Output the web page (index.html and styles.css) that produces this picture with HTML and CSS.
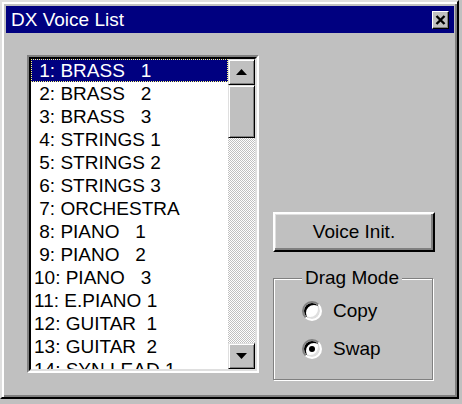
FILE: index.html
```html
<!DOCTYPE html>
<html lang="en">
<head>
    <meta charset="UTF-8">
    <title>DX Voice List</title>
    <link rel="stylesheet" href="styles.css">
</head>
<body>
    <div class="window">
        <div class="titlebar">
            <span class="title">DX Voice List</span>
            <button class="close">
                <svg width="11" height="10" viewBox="0 0 11 10"><path d="M1.5 1 L9.5 9 M9.5 1 L1.5 9" stroke="#000" stroke-width="2.4" fill="none"/></svg>
            </button>
        </div>

        <div class="content">
            <div class="listbox">
                <div class="listbox-inner">
                    <ul class="items">
                        <li class="selected"> 1: BRASS   1</li>
                        <li> 2: BRASS   2</li>
                        <li> 3: BRASS   3</li>
                        <li> 4: STRINGS 1</li>
                        <li> 5: STRINGS 2</li>
                        <li> 6: STRINGS 3</li>
                        <li> 7: ORCHESTRA</li>
                        <li> 8: PIANO   1</li>
                        <li> 9: PIANO   2</li>
                        <li>10: PIANO   3</li>
                        <li>11: E.PIANO 1</li>
                        <li>12: GUITAR  1</li>
                        <li>13: GUITAR  2</li>
                        <li>14: SYN LEAD 1</li>
                    </ul>
                    <div class="scrollbar">
                        <div class="sb-btn">
                            <svg width="11" height="6" viewBox="0 0 11 6"><path d="M5.5 0 L11 6 L0 6 Z" fill="#000"/></svg>
                        </div>
                        <div class="sb-thumb"></div>
                        <div class="sb-track"></div>
                        <div class="sb-btn">
                            <svg width="11" height="6" viewBox="0 0 11 6"><path d="M0 0 L11 0 L5.5 6 Z" fill="#000"/></svg>
                        </div>
                    </div>
                </div>
            </div>

            <div class="side">
                <button class="btn">Voice Init.</button>
                <div class="group">
                    <span class="group-label">Drag Mode</span>
                    <div class="radio"><span class="dot"></span>Copy</div>
                    <div class="radio checked"><span class="dot"></span>Swap</div>
                </div>
            </div>
        </div>
    </div>
</body>
</html>
```

FILE: styles.css
```css
body, html {
    margin: 0;
    padding: 0;
    background-color: #c0c0c0;
    font-family: "Liberation Sans", Arial, sans-serif;
    font-size: 19px;
}
.window {
    width: 459px;
    height: 399px;
    box-sizing: border-box;
    background-color: #c0c0c0;
    border: 2px solid;
    border-color: #dfdfdf #000 #000 #dfdfdf;
    box-shadow: inset 2px 2px 0 #fff, inset -2px -2px 0 #808080;
    padding: 4px 3px 4px 4px;
}
.titlebar {
    height: 27px;
    background-color: #000080;
    color: #fff;
    display: flex;
    align-items: center;
    justify-content: space-between;
    padding: 0 5px 0 5px;
}
.title {
    font-size: 19px;
    line-height: 27px;
}
.close {
    width: 17px;
    height: 18px;
    padding: 0;
    margin: 0;
    background-color: #c0c0c0;
    border: 1px solid;
    border-color: #fff #000 #000 #fff;
    box-shadow: inset -1px -1px 0 #808080;
    display: flex;
    align-items: center;
    justify-content: center;
}
.content {
    display: flex;
    align-items: flex-start;
    padding: 22px 0 0 21px;
}
.listbox {
    width: 232px;
    height: 318px;
    box-sizing: border-box;
    border: 2px solid;
    border-color: #808080 #fff #fff #808080;
}
.listbox-inner {
    height: 100%;
    box-sizing: border-box;
    border: 2px solid;
    border-color: #000 #dfdfdf #dfdfdf #000;
    display: flex;
}
.items {
    flex: 1;
    margin: 0;
    padding: 0;
    list-style: none;
    background-color: #fff;
    overflow: hidden;
}
.items li {
    height: 23px;
    line-height: 23px;
    padding-left: 3px;
    white-space: pre;
    color: #000;
}
.items li.selected {
    background-color: #000080;
    color: #fff;
    border: 1px dotted #ffff80;
    line-height: 21px;
    box-sizing: border-box;
    padding-left: 2px;
}
.scrollbar {
    width: 27px;
    display: flex;
    flex-direction: column;
}
.sb-btn, .sb-thumb {
    box-sizing: border-box;
    background-color: #c0c0c0;
    border: 1px solid;
    border-color: #dfdfdf #000 #000 #dfdfdf;
    box-shadow: inset 1px 1px 0 #fff, inset -1px -1px 0 #808080;
}
.sb-btn {
    height: 26px;
    display: flex;
    align-items: center;
    justify-content: center;
}
.sb-thumb {
    height: 53px;
}
.sb-track {
    flex: 1;
    background: repeating-conic-gradient(#fff 0 25%, #c0c0c0 0 50%) 0 0 / 2px 2px;
}
.side {
    width: 162px;
    margin-left: 14px;
    padding-top: 157px;
}
.btn {
    width: 162px;
    height: 40px;
    padding: 0;
    font-family: inherit;
    font-size: 19px;
    color: #000;
    background-color: #c0c0c0;
    border: 2px solid;
    border-color: #fff #000 #000 #fff;
    box-shadow: inset -2px -2px 0 #808080, inset 1px 1px 0 #dfdfdf;
}
.group {
    position: relative;
    width: 160px;
    height: 102px;
    box-sizing: border-box;
    margin-top: 26px;
    padding: 13px 0 0 28px;
    border: 1px solid #808080;
    box-shadow: inset 1px 1px 0 #fff, 1px 1px 0 #fff;
}
.group-label {
    position: absolute;
    left: 28px;
    top: -12px;
    padding: 0 3px;
    line-height: 22px;
    background-color: #c0c0c0;
}
.radio {
    height: 38px;
    display: flex;
    align-items: center;
}
.dot {
    width: 20px;
    height: 20px;
    box-sizing: border-box;
    border-radius: 50%;
    border: 2px solid;
    border-color: #808080 #fff #fff #808080;
    background-color: #fff;
    box-shadow: inset 2px 2px 0 #000, inset -2px -2px 0 #dfdfdf;
    margin-right: 11px;
    position: relative;
}
.radio.checked .dot::after {
    content: "";
    position: absolute;
    left: 5px;
    top: 5px;
    width: 6px;
    height: 6px;
    border-radius: 50%;
    background-color: #000;
}
```
